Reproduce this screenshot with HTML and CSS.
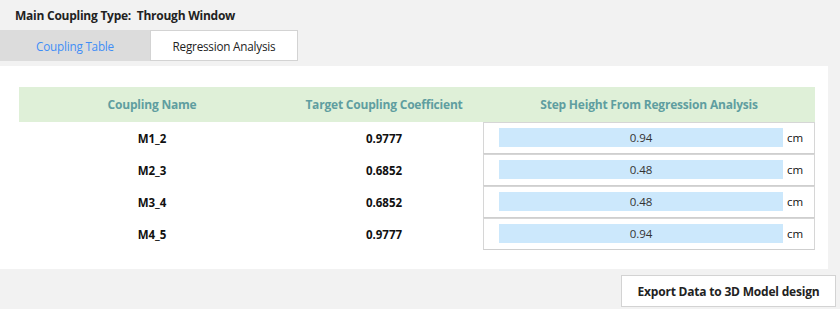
FILE: index.html
```html
<!DOCTYPE html>
<html>
<head>
<meta charset="utf-8">
<link rel="stylesheet" href="styles.css">
</head>
<body>
<div class="title">Main Coupling Type:&nbsp; Through Window</div>
<div class="tabs">
  <div class="tab active">Coupling Table</div>
  <div class="tab">Regression Analysis</div>
</div>
<div class="panel">
  <div class="table">
    <div class="hcell">Coupling Name</div>
    <div class="hcell">Target Coupling Coefficient</div>
    <div class="hcell">Step Height From Regression Analysis</div>

    <div class="cell">M1_2</div>
    <div class="cell">0.9777</div>
    <div class="inbox"><div class="bar">0.94</div><span class="unit">cm</span></div>

    <div class="cell">M2_3</div>
    <div class="cell">0.6852</div>
    <div class="inbox"><div class="bar">0.48</div><span class="unit">cm</span></div>

    <div class="cell">M3_4</div>
    <div class="cell">0.6852</div>
    <div class="inbox"><div class="bar">0.48</div><span class="unit">cm</span></div>

    <div class="cell">M4_5</div>
    <div class="cell">0.9777</div>
    <div class="inbox"><div class="bar">0.94</div><span class="unit">cm</span></div>
  </div>
</div>
<div class="footer">
  <button class="export">Export Data to 3D Model design</button>
</div>
</body>
</html>
```
FILE: styles.css
```css
html, body {
  margin: 0;
  padding: 0;
}
body {
  background: #f2f2f2;
  font-family: "Open Sans", "Noto Sans", sans-serif;
  font-size: 12px;
  color: #222;
  width: 840px;
  height: 309px;
  overflow: hidden;
}
.title {
  height: 30px;
  line-height: 32px;
  padding-left: 15px;
  font-weight: bold;
  font-size: 12px;
  letter-spacing: -0.25px;
}
.tabs {
  display: flex;
  height: 31px;
  margin-bottom: 5px;
}
.tab {
  box-sizing: border-box;
  display: flex;
  align-items: center;
  justify-content: center;
  font-size: 11.7px;
  letter-spacing: -0.2px;
}
.tab.active {
  width: 150px;
  background: #dcdcdc;
  color: #3f8ef7;
}
.tab:not(.active) {
  width: 148px;
  background: #fff;
  border: 1px solid #d3d3d3;
  color: #222;
}
.panel {
  width: 828px;
  box-sizing: border-box;
  background: #fff;
  padding: 21px 13px 19px 19px;
}
.table {
  display: grid;
  grid-template-columns: 266px 198px 332px;
  grid-auto-rows: 32px;
  grid-template-rows: 35px;
}
.hcell {
  background: #dff0d8;
  color: #5f9ea0;
  font-weight: bold;
  font-size: 12px;
  letter-spacing: -0.2px;
  display: flex;
  align-items: center;
  justify-content: center;
}
.cell {
  display: flex;
  align-items: center;
  justify-content: center;
  font-weight: bold;
  font-size: 11.5px;
  color: #111;
}
.inbox {
  box-sizing: border-box;
  height: 32px;
  border: 1px solid #d6d6d6;
  border-bottom-color: #cfcfcf;
  padding: 5px 0 0 15px;
  display: flex;
  align-items: flex-start;
}
.bar {
  width: 284px;
  height: 19px;
  background: #cce8fc;
  text-align: center;
  line-height: 19px;
  font-size: 11.5px;
  color: #333;
}
.unit {
  margin-left: 4px;
  line-height: 19px;
  font-size: 11.5px;
  color: #111;
}
.footer {
  display: flex;
  justify-content: flex-end;
  padding: 6px 4px 0 0;
}
.export {
  box-sizing: border-box;
  width: 215px;
  height: 32px;
  background: #fff;
  border: 1px solid #d3d3d3;
  font-family: "Open Sans", "Noto Sans", sans-serif;
  font-weight: bold;
  font-size: 12px;
  letter-spacing: -0.2px;
  color: #222;
  padding: 0;
}
```
